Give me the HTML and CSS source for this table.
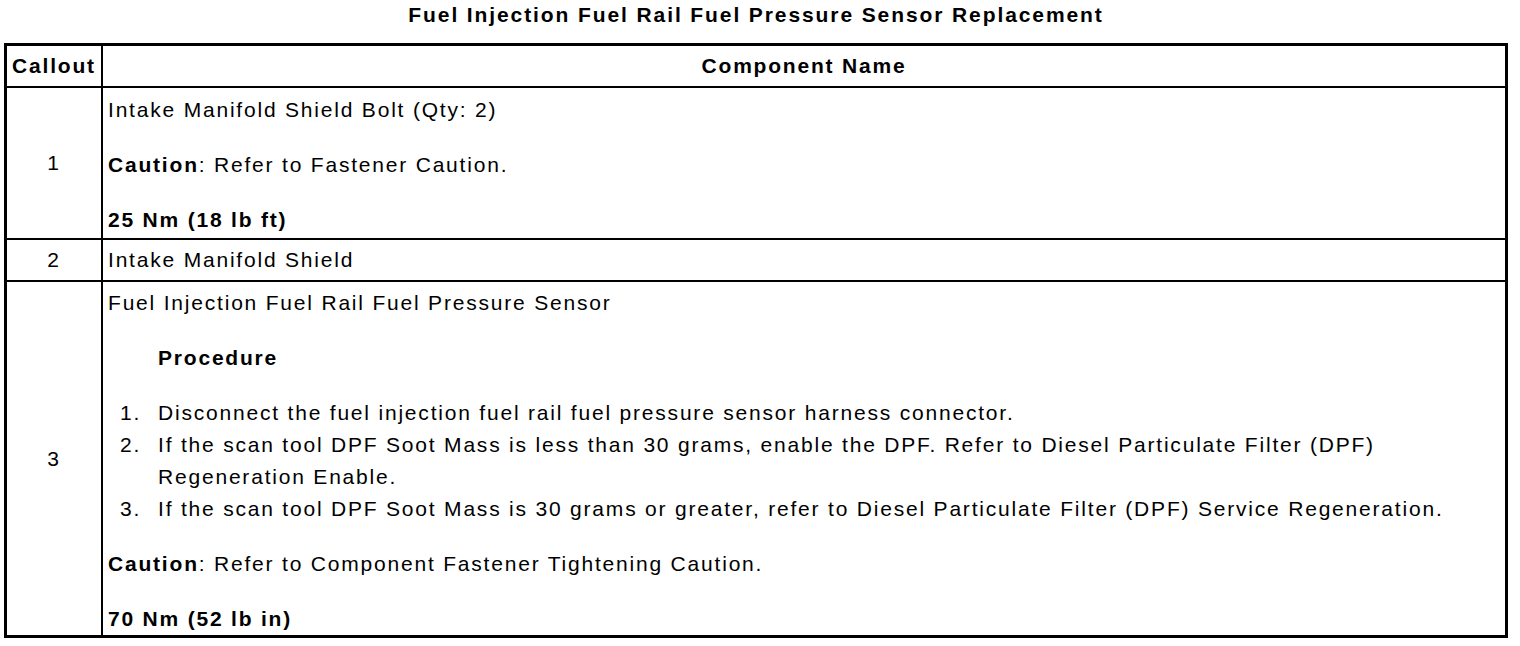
FILE: index.html
```html
<!DOCTYPE html>
<html>
<head>
<meta charset="utf-8">
<link rel="stylesheet" href="styles.css">
</head>
<body>
<h1 class="title">Fuel Injection Fuel Rail Fuel Pressure Sensor Replacement</h1>
<table class="parts">
  <thead>
    <tr>
      <th class="col-callout">Callout</th>
      <th class="col-name">Component Name</th>
    </tr>
  </thead>
  <tbody>
    <tr>
      <td class="callout">1</td>
      <td class="name">
        <p>Intake Manifold Shield Bolt (Qty: 2)</p>
        <p><b>Caution</b>: Refer to Fastener Caution.</p>
        <p><b>25 Nm (18 lb ft)</b></p>
      </td>
    </tr>
    <tr>
      <td class="callout">2</td>
      <td class="name single"><p>Intake Manifold Shield</p></td>
    </tr>
    <tr>
      <td class="callout">3</td>
      <td class="name last">
        <p>Fuel Injection Fuel Rail Fuel Pressure Sensor</p>
        <p class="proc-title"><b>Procedure</b></p>
        <ol class="steps">
          <li>Disconnect the fuel injection fuel rail fuel pressure sensor harness connector.</li>
          <li>If the scan tool DPF Soot Mass is less than 30 grams, enable the DPF. Refer to Diesel Particulate Filter (DPF) Regeneration Enable.</li>
          <li>If the scan tool DPF Soot Mass is 30 grams or greater, refer to Diesel Particulate Filter (DPF) Service Regeneration.</li>
        </ol>
        <p><b>Caution</b>: Refer to Component Fastener Tightening Caution.</p>
        <p><b>70 Nm (52 lb in)</b></p>
      </td>
    </tr>
  </tbody>
</table>
</body>
</html>
```
FILE: styles.css
```css
html, body {
  margin: 0;
  padding: 0;
  background: #fff;
}
body {
  font-family: "Liberation Sans", Arial, Helvetica, sans-serif;
  font-size: 21px;
  letter-spacing: 1.8px;
  color: #000;
}
.title {
  margin: 0 0 0 4px;
  width: 1504px;
  height: 43px;
  line-height: 30px;
  font-size: 21px;
  font-weight: bold;
  letter-spacing: 1.9px;
  text-align: center;
}
.parts {
  margin-left: 4px;
  width: 1504px;
  border-collapse: collapse;
  border: 3px solid #000;
}
.parts th, .parts td {
  border: 2px solid #000;
  line-height: 32px;
  vertical-align: middle;
}
.parts th {
  font-weight: bold;
  padding: 4px 2px;
  text-align: center;
}
.col-callout {
  width: 90px;
}
.callout {
  text-align: center;
  padding: 0;
}
.name {
  padding: 6px 6px 2px 5px;
  text-align: left;
}
.name.single {
  padding: 4px 6px 4px 5px;
}
.name.last {
  padding: 5px 6px 0 5px;
}
.name p {
  margin: 0 0 23px 0;
}
.name p:last-child {
  margin-bottom: 0;
}
.proc-title {
  padding-left: 50px;
}
.steps {
  margin: 0 0 23px 0;
  padding: 0;
  list-style: none;
  counter-reset: step;
}
.steps li {
  display: flex;
  counter-increment: step;
}
.steps li::before {
  content: counter(step) ".";
  flex: 0 0 38px;
  padding-left: 12px;
}
```
